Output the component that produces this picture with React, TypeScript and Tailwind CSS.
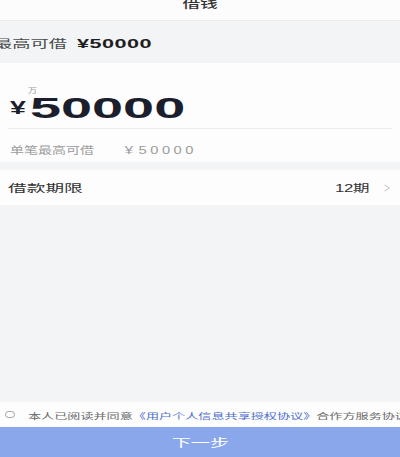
import React from 'react';

const cjk = "font-['Noto_Sans_CJK_SC','Noto_Sans',sans-serif]";
const num = "font-['Liberation_Sans','Noto_Sans_CJK_SC',sans-serif]";

// Chevron used on the right side of a list row
const Chevron = () => (
  <svg width="8" height="8" viewBox="0 0 8 8" className="block">
    <polyline points="1.5,1 6.5,4 1.5,7" fill="none" stroke="#c4c4c4" strokeWidth="1" />
  </svg>
);

export default function App() {
  return (
    <div className={`w-[400px] h-[457px] overflow-hidden bg-[#f3f4f6] flex flex-col ${cjk}`}>
      {/* Title bar */}
      <div className="h-[21px] shrink-0 bg-[#fcfcfc] border-b border-[#ebebeb] flex justify-center overflow-hidden">
        <span className="-mt-[4px] leading-[14px] text-[11px] font-medium text-[#333] inline-block scale-x-[1.6] whitespace-nowrap">
          借钱
        </span>
      </div>

      {/* Max amount band */}
      <div className="h-[42px] shrink-0 flex items-center overflow-hidden">
        <span className="-ml-[6px] inline-block origin-left scale-x-[1.66] whitespace-nowrap leading-[14px]">
          <span className="text-[11px] text-[#4a4a4a]">最高可借</span>
          <span className={`ml-[6px] text-[13px] font-bold tracking-[0.3px] text-[#1e1e1e] ${num}`}>¥50000</span>
        </span>
      </div>

      {/* Amount card */}
      <div className="h-[99px] shrink-0 bg-[#fdfdfd] pt-[18px] px-[8px]">
        <div className="h-[10px] leading-[10px] pl-[20px]">
          <span className="inline-block origin-left scale-x-[1.3] text-[7px] text-[#9a9a9a] whitespace-nowrap">万</span>
        </div>
        <div className="mt-[2px] h-[30px] flex items-center pl-[2px]">
          <div className="w-[20px] shrink-0">
            <span className={`inline-block origin-left scale-x-[1.5] text-[19px] leading-[30px] font-bold text-[#1b1e2c] ${num}`}>¥</span>
          </div>
          <span className={`inline-block origin-left scale-x-[1.86] text-[30px] leading-[30px] font-bold text-[#1b1e2c] whitespace-nowrap ${num}`}>
            50000
          </span>
        </div>
        <div className="mt-[5px] h-px bg-[#ececec]" />
        <div className="mt-[11px] h-[14px] leading-[14px] pl-[2px]">
          <span className="inline-block origin-left scale-x-[1.4] whitespace-nowrap text-[#9c9c9c]">
            <span className="text-[10px]">单笔最高可借</span>
            <span className={`ml-[22px] text-[10.5px] ${num}`}>¥</span>
            <span className={`ml-[4px] text-[10.5px] tracking-[2.5px] ${num}`}>50000</span>
          </span>
        </div>
      </div>

      {/* Loan term row */}
      <div className="mt-[8px] h-[35px] shrink-0 bg-[#fdfdfd] flex items-center justify-between pl-[8px] pr-[9px]">
        <span className="inline-block origin-left scale-x-[1.78] text-[10.5px] leading-[14px] text-[#333] whitespace-nowrap">
          借款期限
        </span>
        <div className="flex items-center gap-[13px]">
          <span className="inline-block origin-right scale-x-[1.6] text-[10.5px] leading-[14px] text-[#333] whitespace-nowrap">
            <span className={`${num} tracking-[-0.3px]`}>12</span>期
          </span>
          <Chevron />
        </div>
      </div>

      <div className="flex-1" />

      {/* Agreement */}
      <div className="h-[25px] shrink-0 bg-[#fdfdfd] flex items-center pl-[5px] overflow-hidden">
        <div className="w-[10px] h-[7px] shrink-0 rounded-full border border-[#a0a0a0]" />
        <span className="ml-[13px] inline-block origin-left scale-x-[1.6] text-[8.2px] leading-[12px] whitespace-nowrap">
          <span className="text-[#6a6a6a]">本人已阅读并同意</span>
          <span className="text-[#4d6fd0]">《用户个人信息共享授权协议》</span>
          <span className="text-[#6a6a6a]">合作方服务协议</span>
        </span>
      </div>

      {/* Next button */}
      <button className="h-[30px] shrink-0 w-full bg-[#8aa7eb] flex items-center justify-center">
        <span className="inline-block scale-x-[1.75] text-[11px] leading-[14px] text-white whitespace-nowrap">下一步</span>
      </button>
    </div>
  );
}
